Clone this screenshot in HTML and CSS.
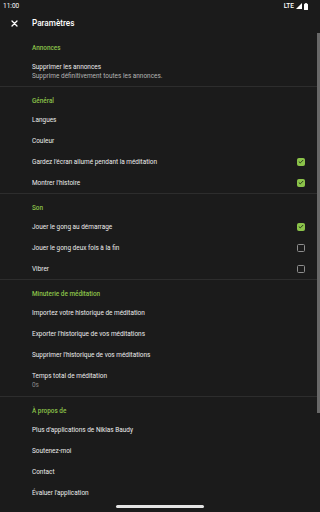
FILE: index.html
```html
<!DOCTYPE html>
<html lang="fr">
<head>
  <meta charset="UTF-8">
  <meta name="viewport" content="width=device-width, initial-scale=1.0">
  <title>Paramètres</title>
  <link rel="stylesheet" href="styles.css">
</head>
<body>
  <div class="status-bar">
    <span class="time">11:00</span>
    <div class="status-icons">
      <span class="lte">LTE</span>
      <svg width="6" height="6" viewBox="0 0 6 6"><path d="M6 0V6H0Z" fill="#fff"/></svg>
      <svg width="4" height="7" viewBox="0 0 4 7"><rect x="0" y="0.8" width="4" height="6.2" rx="0.6" fill="#fff"/><rect x="1.2" y="0" width="1.6" height="1" fill="#fff"/></svg>
    </div>
  </div>

  <div class="toolbar">
    <svg class="close-icon" width="7" height="7" viewBox="0 0 7 7">
      <path d="M1 1L6 6M6 1L1 6" stroke="#fff" stroke-width="1.3" stroke-linecap="round"/>
    </svg>
    <span class="toolbar-title">Paramètres</span>
  </div>

  <div class="settings">
    <div class="section">
      <div class="section-title">Annonces</div>
      <div class="row two-line">
        <span class="row-title">Supprimer les annonces</span>
        <span class="row-summary">Supprime définitivement toutes les annonces.</span>
      </div>
    </div>

    <div class="section">
      <div class="section-title">Général</div>
      <div class="row"><span class="row-title">Langues</span></div>
      <div class="row"><span class="row-title">Couleur</span></div>
      <div class="row">
        <span class="row-title">Gardez l'écran allumé pendant la méditation</span>
        <span class="checkbox checked"><svg width="6" height="5" viewBox="0 0 6 5"><path d="M0.8 2.6L2.3 3.9L5.2 1" stroke="#2a3a1a" stroke-width="1" fill="none"/></svg></span>
      </div>
      <div class="row">
        <span class="row-title">Montrer l'histoire</span>
        <span class="checkbox checked"><svg width="6" height="5" viewBox="0 0 6 5"><path d="M0.8 2.6L2.3 3.9L5.2 1" stroke="#2a3a1a" stroke-width="1" fill="none"/></svg></span>
      </div>
    </div>

    <div class="section">
      <div class="section-title">Son</div>
      <div class="row">
        <span class="row-title">Jouer le gong au démarrage</span>
        <span class="checkbox checked"><svg width="6" height="5" viewBox="0 0 6 5"><path d="M0.8 2.6L2.3 3.9L5.2 1" stroke="#2a3a1a" stroke-width="1" fill="none"/></svg></span>
      </div>
      <div class="row">
        <span class="row-title">Jouer le gong deux fois à la fin</span>
        <span class="checkbox"></span>
      </div>
      <div class="row">
        <span class="row-title">Vibrer</span>
        <span class="checkbox"></span>
      </div>
    </div>

    <div class="section">
      <div class="section-title">Minuterie de méditation</div>
      <div class="row"><span class="row-title">Importez votre historique de méditation</span></div>
      <div class="row"><span class="row-title">Exporter l'historique de vos méditations</span></div>
      <div class="row"><span class="row-title">Supprimer l'historique de vos méditations</span></div>
      <div class="row two-line tall">
        <span class="row-title">Temps total de méditation</span>
        <span class="row-summary dim">0s</span>
      </div>
    </div>

    <div class="section">
      <div class="section-title">À propos de</div>
      <div class="row"><span class="row-title">Plus d'applications de Niklas Baudy</span></div>
      <div class="row"><span class="row-title">Soutenez-moi</span></div>
      <div class="row"><span class="row-title">Contact</span></div>
      <div class="row"><span class="row-title">Évaluer l'application</span></div>
    </div>
  </div>

  <div class="scrollbar"></div>
  <div class="nav-handle"></div>
</body>
</html>
```

FILE: styles.css
```css
body {
  margin: 0;
  width: 320px;
  height: 512px;
  overflow: hidden;
  position: relative;
  background-color: #1b1b1b;
  color: #ececec;
  font-family: Roboto, 'Noto Sans', sans-serif;
}

.status-bar {
  height: 12px;
  display: flex;
  align-items: center;
  justify-content: space-between;
  padding: 0 12px 0 3px;
  font-size: 6.5px;
  color: #fff;
}

.status-icons {
  display: flex;
  align-items: center;
  gap: 2px;
}

.lte {
  font-size: 6.5px;
  font-weight: 500;
}

.toolbar {
  height: 22px;
  display: flex;
  align-items: center;
}

.close-icon {
  margin-left: 11px;
  margin-right: 14px;
}

.toolbar-title {
  font-size: 8.2px;
  font-weight: 500;
  color: #fff;
}

.section {
  border-top: 1px solid #2d2d2d;
}

.section:first-child {
  border-top: none;
}

.section-title {
  padding: 8px 0 2px 32px;
  height: 12px;
  line-height: 12px;
  font-size: 6.4px;
  font-weight: 500;
  color: #8bc34a;
}

.row {
  height: 21px;
  display: flex;
  align-items: center;
  justify-content: space-between;
  padding: 0 15px 0 32px;
}

.row-title {
  font-size: 6.45px;
  color: #ececec;
}

.two-line {
  height: auto;
  flex-direction: column;
  align-items: flex-start;
  padding-top: 6px;
  padding-bottom: 5px;
}

.two-line .row-title {
  line-height: 10px;
}

.row-summary {
  line-height: 9px;
  font-size: 6.45px;
  color: #b4b4b4;
}

.row-summary.dim {
  color: #8a8a8a;
}

.tall {
  padding-bottom: 6px;
}

.checkbox {
  width: 6px;
  height: 6px;
  border: 1.3px solid #8e8e8e;
  border-radius: 1.5px;
  display: flex;
  align-items: center;
  justify-content: center;
}

.checkbox.checked {
  background-color: #8bc34a;
  border-color: #8bc34a;
}

.scrollbar {
  position: absolute;
  right: 0;
  top: 33px;
  width: 3px;
  height: 380px;
  background-color: #686868;
}

.nav-handle {
  position: absolute;
  left: 116px;
  bottom: 4px;
  width: 88px;
  height: 3px;
  border-radius: 2px;
  background-color: #e4e4e4;
}
```
